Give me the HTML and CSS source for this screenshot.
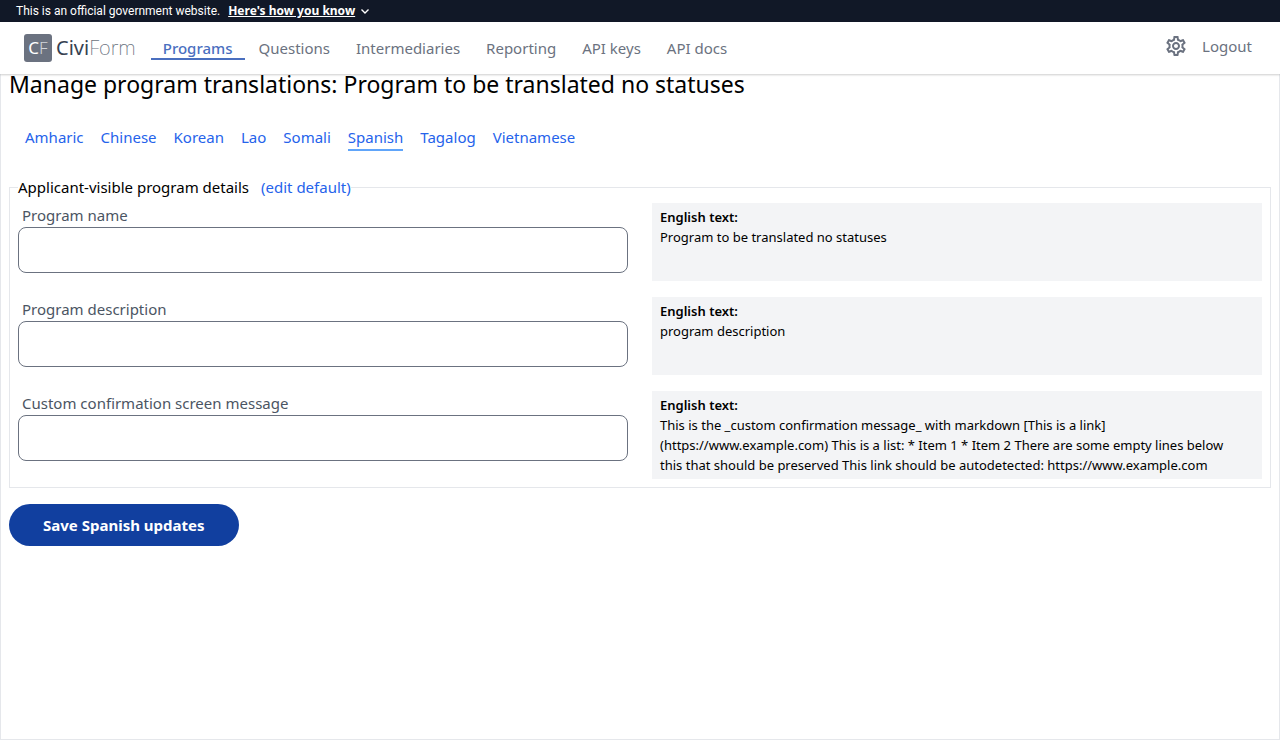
FILE: index.html
```html
<!DOCTYPE html>
<html lang="en">
<head>
<meta charset="utf-8">
<title>Manage program translations</title>
<link rel="stylesheet" href="styles.css">
</head>
<body>
<header class="site-header">
  <div class="banner">
    <span class="banner-text">This is an official government website.</span>
    <button type="button" class="banner-button"><span class="banner-label">Here's how you know</span>
      <svg class="chevron" viewBox="0 0 12 12" aria-hidden="true"><path d="M2.5 4.5 6 8 9.500 4.500"/></svg>
    </button>
  </div>
  <nav class="nav" aria-label="Main">
    <a class="brand" href="#"><span class="brand-mark"><span class="brand-c">C</span><span class="brand-f">F</span></span><span class="brand-name"><span>Civi</span><span class="brand-form">Form</span></span></a>
    <div class="nav-links">
      <a class="nav-link nav-link-current" href="#">Programs</a>
      <a class="nav-link" href="#">Questions</a>
      <a class="nav-link" href="#">Intermediaries</a>
      <a class="nav-link" href="#">Reporting</a>
      <a class="nav-link" href="#">API keys</a>
      <a class="nav-link" href="#">API docs</a>
    </div>
    <div class="nav-end">
      <a class="settings" href="#" aria-label="Settings"><svg class="gear" viewBox="0 0 24 24" aria-hidden="true"><path d="M19.43 12.98c.04-.32.07-.64.07-.98 0-.34-.03-.66-.07-.98l2.11-1.65c.19-.15.24-.42.12-.64l-2-3.46c-.09-.16-.26-.25-.44-.25-.06 0-.12.01-.17.03l-2.49 1c-.52-.4-1.08-.73-1.69-.98l-.38-2.65C14.46 2.18 14.25 2 14 2h-4c-.25 0-.46.18-.49.42l-.38 2.65c-.61.25-1.17.59-1.69.98l-2.49-1c-.06-.02-.12-.03-.18-.03-.17 0-.34.09-.43.25l-2 3.46c-.13.22-.07.49.12.64l2.11 1.65c-.04.32-.07.65-.07.98 0 .33.03.66.07.98l-2.11 1.65c-.19.15-.24.42-.12.64l2 3.46c.09.16.26.25.44.25.06 0 .12-.01.17-.03l2.49-1c.52.4 1.08.73 1.69.98l.38 2.65c.03.24.24.42.49.42h4c.25 0 .46-.18.49-.42l.38-2.65c.61-.25 1.17-.59 1.69-.98l2.49 1c.06.02.12.03.18.03.17 0 .34-.09.43-.25l2-3.46c.12-.22.07-.49-.12-.64l-2.11-1.65zm-1.98-1.71c.04.31.05.52.05.73 0 .21-.02.43-.05.73l-.14 1.13.89.7 1.08.84-.7 1.21-1.27-.51-1.04-.42-.9.68c-.43.32-.84.56-1.25.73l-1.06.43-.16 1.13-.2 1.35h-1.4l-.19-1.35-.16-1.13-1.06-.43c-.43-.18-.83-.41-1.23-.71l-.91-.7-1.06.43-1.27.51-.7-1.21 1.08-.84.89-.7-.14-1.13c-.03-.31-.05-.54-.05-.74s.02-.43.05-.73l.14-1.13-.89-.7-1.08-.84.7-1.21 1.27.51 1.04.42.9-.68c.43-.32.84-.56 1.25-.73l1.06-.43.16-1.13.2-1.35h1.39l.19 1.35.16 1.13 1.06.43c.43.18.83.41 1.23.71l.91.7 1.06-.43 1.27-.51.7 1.21-1.07.85-.89.7.14 1.13zM12 8c-2.21 0-4 1.79-4 4s1.79 4 4 4 4-1.79 4-4-1.79-4-4-4zm0 6c-1.1 0-2-.9-2-2s.9-2 2-2 2 .9 2 2-.9 2-2 2z"/></svg></a>
      <a class="logout" href="#">Logout</a>
    </div>
  </nav>
</header>
<main class="page">
  <h1 class="title">Manage program translations: Program to be translated no statuses</h1>
  <nav class="languages" aria-label="Languages">
    <a class="language" href="#">Amharic</a>
    <a class="language" href="#">Chinese</a>
    <a class="language" href="#">Korean</a>
    <a class="language" href="#">Lao</a>
    <a class="language" href="#">Somali</a>
    <a class="language language-current" href="#">Spanish</a>
    <a class="language" href="#">Tagalog</a>
    <a class="language" href="#">Vietnamese</a>
  </nav>
  <form>
    <fieldset class="details">
      <legend class="legend">Applicant-visible program details<a class="edit" href="#">(edit default)</a></legend>
      <div class="rows">
        <div class="row">
          <div class="field"><label class="label" for="name">Program name</label><input class="input" id="name" type="text"></div>
          <div class="english"><p class="english-title">English text:</p><p class="english-text">Program to be translated no statuses</p></div>
        </div>
        <div class="row">
          <div class="field"><label class="label" for="description">Program description</label><input class="input" id="description" type="text"></div>
          <div class="english"><p class="english-title">English text:</p><p class="english-text">program description</p></div>
        </div>
        <div class="row">
          <div class="field"><label class="label" for="message">Custom confirmation screen message</label><input class="input" id="message" type="text"></div>
          <div class="english"><p class="english-title">English text:</p><p class="english-text">This is the _custom confirmation message_ with markdown [This is a link](https://www.example.com) This is a list: * Item 1 * Item 2 There are some empty lines below this that should be preserved This link should be autodetected: https://www.example.com</p></div>
        </div>
      </div>
    </fieldset>
    <button class="save" type="submit">Save Spanish updates</button>
  </form>
</main>
</body>
</html>
```
FILE: styles.css
```css
* { box-sizing: border-box; }
body {
  margin: 0;
  min-height: 100vh;
  display: flex;
  flex-direction: column;
  background: #fff;
  color: #000;
  font: 15px/24px "Noto Sans", sans-serif;
}
a { text-decoration: none; }
h1, p { margin: 0; }

.site-header { position: sticky; top: 0; z-index: 1; }
.banner {
  display: flex;
  align-items: center;
  gap: 8px;
  height: 22px;
  padding: 0 16px;
  background: #111827;
  color: #fff;
  font-size: 12px;
}
.banner-text { font-family: Roboto, sans-serif; }
.banner-button {
  display: flex;
  align-items: center;
  gap: 4px;
  padding: 0;
  border: 0;
  background: none;
  color: inherit;
  font: inherit;
  font-weight: 700;
}
.banner-label { text-decoration: underline; }
.chevron { width: 12px; height: 12px; fill: none; stroke: #fff; stroke-width: 1.4; }

.nav {
  display: flex;
  align-items: center;
  height: 52px;
  padding: 0 28px 0 24px;
  background: #fff;
  box-shadow: 0 1px 2px rgba(0, 0, 0, .2);
}
.brand { display: flex; align-items: center; gap: 4px; margin-right: 15px; color: #374151; }
.brand-mark {
  display: flex;
  align-items: center;
  justify-content: center;
  width: 28px;
  height: 28px;
  border-radius: 3px;
  background: #6b7280;
  color: #fff;
  font-size: 17px;
}
.brand-f { font-weight: 300; color: #d1d5db; }
.brand-name { font-size: 20px; }
.brand-form { font-weight: 200; color: #6b7280; }
.nav-links { display: flex; gap: 2px; }
.nav-link {
  padding: 2px 12px 0;
  border-bottom: 2px solid transparent;
  line-height: 20px;
  color: #6b7280;
}
.nav-link-current { border-color: #4a6fbf; color: #4a6fbf; font-weight: 500; }
.nav-end { display: flex; align-items: center; gap: 14px; margin-left: auto; padding-bottom: 4px; }
.settings { display: flex; }
.gear { width: 24px; height: 24px; fill: #6b7280; }
.logout { color: #6b7280; }

.page {
  flex: 1;
  padding: 0 8px;
  border: 1px solid #e5e7eb;
  border-top: 0;
}
.title { font-size: 23px; font-weight: 400; line-height: 20px; }
.languages { display: flex; gap: 17px; margin: 31px 0 24px; padding-left: 16px; }
.language { border-bottom: 2px solid transparent; color: #2563eb; }
.language-current { border-color: #60a5fa; }

.details { margin: 0; padding: 0 8px 8px; border: 1px solid #e5e7eb; }
.legend { padding: 0; }
.edit { margin-left: 12px; color: #2563eb; }
.rows { display: grid; gap: 16px; padding-top: 4px; }
.row { display: grid; grid-template-columns: 1fr 1fr; gap: 24px; }
.label { display: block; padding-left: 4px; color: #4b5563; }
.input {
  display: block;
  width: 100%;
  height: 46px;
  margin-bottom: 8px;
  padding: 8px;
  border: 1px solid #6b7280;
  border-radius: 8px;
  background: #fff;
  font: inherit;
}
.english { padding: 4px 16px 4px 8px; background: #f3f4f6; font-size: 13px; line-height: 20px; }
.english-title { font-weight: 600; }
.save {
  height: 42px;
  margin-top: 16px;
  padding: 0 34px;
  border: 0;
  border-radius: 21px;
  background: #113f9f;
  color: #fff;
  font: inherit;
  font-weight: 700;
}
```
